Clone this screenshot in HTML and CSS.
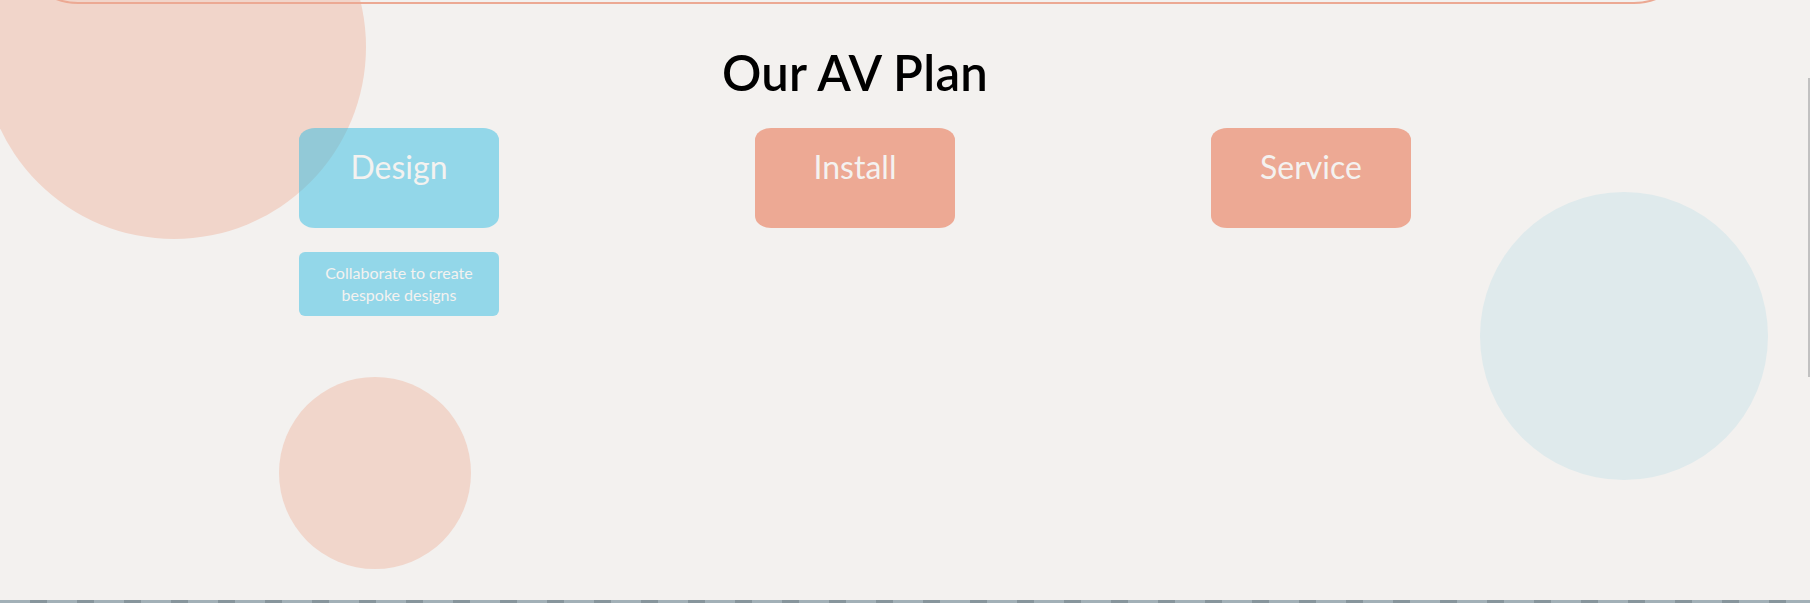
FILE: index.html
```html
<!DOCTYPE html>
<html lang="en">
<head>
<meta charset="utf-8">
<title>Our AV Plan</title>
<link rel="stylesheet" href="styles.css">
</head>
<body>
<main class="page">
  <section class="plan">
    <div class="blob blob-top"></div>
    <div class="blob blob-bottom"></div>
    <div class="blob blob-right"></div>
    <div class="prev-edge"></div>
    <div class="wrap">
      <h1 class="title">Our AV Plan</h1>
      <div class="steps">
        <div class="step">
          <div class="card card-blue"><span>Design</span></div>
          <div class="desc card-blue">Collaborate to create bespoke designs</div>
        </div>
        <div class="step">
          <div class="card card-salmon"><span>Install</span></div>
        </div>
        <div class="step">
          <div class="card card-salmon"><span>Service</span></div>
        </div>
      </div>
    </div>
    <div class="scroll-thumb"></div>
  </section>
  <div class="next-strip"></div>
</main>
</body>
</html>
```
FILE: styles.css
```css
html, body {
  margin: 0;
  padding: 0;
  background: #f3f1ef;
  overflow: hidden;
}
body {
  font-family: Lato, "Noto Sans", "Open Sans", sans-serif;
  color: #000;
}
.page {
  width: 1810px;
}
.plan {
  position: relative;
  height: 600px;
  overflow: hidden;
}
.prev-edge {
  position: absolute;
  z-index: 1;
  left: 18px;
  width: 1672px;
  top: -96px;
  height: 96px;
  border: 2px solid #eca993;
  border-radius: 0 0 60px 60px;
  background: transparent;
}
.blob {
  position: absolute;
  border-radius: 50%;
  z-index: 0;
}
.blob-top {
  left: -18px;
  top: -145px;
  width: 384px;
  height: 384px;
  background: #f1d5ca;
}
.blob-bottom {
  left: 279px;
  top: 377px;
  width: 192px;
  height: 192px;
  background: #f1d6cb;
}
.blob-right {
  left: 1480px;
  top: 192px;
  width: 288px;
  height: 288px;
  background: #dfeaec;
}
.wrap {
  position: relative;
  z-index: 1;
  width: 1710px;
  padding-top: 43px;
}
.title {
  margin: 0;
  text-align: center;
  font-size: 49px;
  font-weight: 600;
  line-height: 1.2;
  letter-spacing: 0.3px;
}
.steps {
  display: grid;
  grid-template-columns: repeat(3, 456px);
  justify-content: center;
  margin-top: 26px;
}
.step {
  display: flex;
  flex-direction: column;
  align-items: center;
  gap: 24px;
}
.card {
  width: 200px;
  height: 100px;
  box-sizing: border-box;
  padding-top: 20px;
  border-radius: 16px / 12px;
  text-align: center;
  color: #f4f2f0;
  font-size: 32px;
  line-height: 1.2;
}
.card-blue {
  background: rgba(52, 190, 228, 0.5);
}
.card-salmon {
  background: #eda994;
}
.desc {
  width: 200px;
  box-sizing: border-box;
  padding: 10px 18px;
  border-radius: 6px;
  text-align: center;
  color: #f4f2f0;
  font-size: 16px;
  line-height: 22px;
}
.scroll-thumb {
  position: absolute;
  right: 0;
  top: 78px;
  width: 2px;
  height: 299px;
  background: #c1c1c1;
  z-index: 2;
}
.next-strip {
  height: 3px;
  background: repeating-linear-gradient(90deg, #a2b0b7 0 30px, #87959c 30px 47px);
}
```
